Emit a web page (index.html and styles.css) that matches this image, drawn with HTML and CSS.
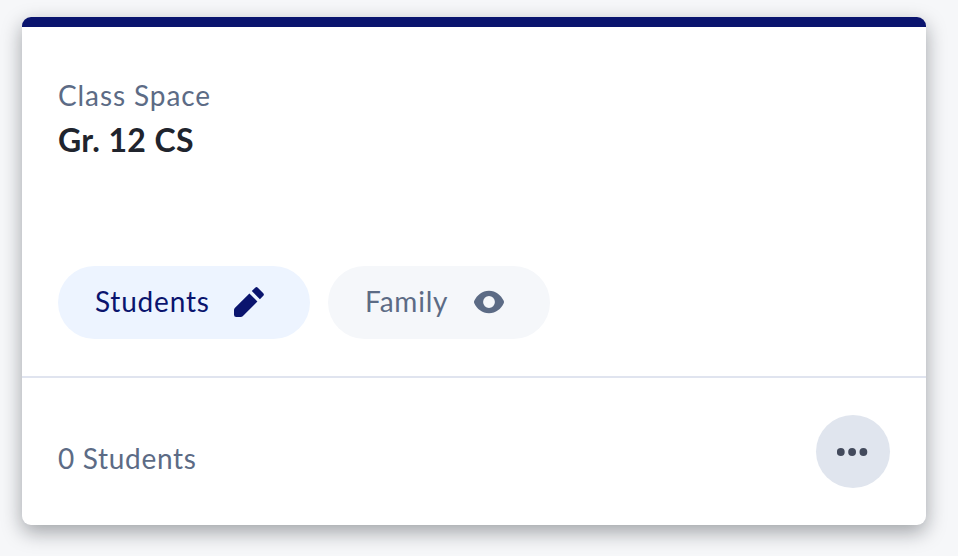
FILE: index.html
```html
<!DOCTYPE html>
<html lang="en">
<head>
<meta charset="utf-8">
<title>Class Space</title>
<link rel="stylesheet" href="styles.css">
</head>
<body>
<article class="card">
  <div class="card-body">
    <div class="eyebrow">Class Space</div>
    <h1 class="title">Gr. 12 CS</h1>
    <div class="pills">
      <div class="pill pill-students">
        <span class="pill-label">Students</span>
        <svg class="icon" viewBox="0 0 30 30" aria-hidden="true"><path d="M0 23Q0 21.9.8 21.1L15.4 6.5 23.4 14.5 8.7 29.2Q7.9 30 6.8 30H2.2Q0 30 0 27.8ZM17.8 4.1 21.2.7Q22.5-.5 23.8.7L29.3 6.2Q30.5 7.5 29.3 8.8L25.9 12.2Z"/></svg>
      </div>
      <div class="pill pill-family">
        <span class="pill-label">Family</span>
        <svg class="icon" viewBox="0 0 30 30" aria-hidden="true"><path fill-rule="evenodd" d="M15 3.7C22 3.7 27 8.3 29.6 13.5Q30.4 15 29.6 16.5C27 21.7 22 26.3 15 26.3S3 21.7.4 16.5Q-.4 15 .4 13.5C3 8.3 8 3.7 15 3.7ZM15 9.1A5.9 5.9 0 1 0 15 20.9 5.9 5.9 0 1 0 15 9.1Z"/></svg>
      </div>
    </div>
  </div>
  <footer class="card-footer">
    <span class="count">0 Students</span>
    <button class="more" type="button" aria-label="More options">
      <svg class="dots" viewBox="0 0 32 8" aria-hidden="true"><circle cx="3.8" cy="4" r="3.9"/><circle cx="15.1" cy="4" r="3.9"/><circle cx="26.4" cy="4" r="3.9"/></svg>
    </button>
  </footer>
</article>
</body>
</html>
```
FILE: styles.css
```css
* { box-sizing: border-box; }

body {
  margin: 0;
  height: 556px;
  overflow: hidden;
  padding: 17px 32px 31px 22px;
  background: #f6f7f9;
  color: #5c6b85;
  font: 400 28px/38px Lato, "Open Sans", sans-serif;
}

.card {
  height: 508px;
  display: flex;
  flex-direction: column;
  border-top: 10px solid #0a146e;
  border-radius: 9px;
  background: #fff;
  box-shadow: 0 7px 20px rgba(10, 15, 25, 0.37);
}

.card-body {
  height: 351px;
  padding: 49px 36px 0;
  border-bottom: 2px solid #e0e4ef;
}

.eyebrow { letter-spacing: 0.9px; }

.title {
  margin: 0;
  color: #20242d;
  font-size: 32px;
  font-weight: 700;
  letter-spacing: 0.35px;
  line-height: 52px;
}

.pills {
  display: flex;
  gap: 18px;
  margin-top: 100px;
}

.pill {
  height: 73px;
  display: flex;
  align-items: center;
  justify-content: space-between;
  padding: 0 46px 1px 37px;
  border-radius: 37px;
}

.pill-students { width: 252px; background: #edf4ff; color: #0a146e; }
.pill-family { width: 222px; background: #f5f7fa; }

.pill-label { padding-bottom: 3px; letter-spacing: 0.8px; }

.icon { width: 30px; height: 30px; fill: currentColor; }

.card-footer {
  flex: 1;
  display: flex;
  justify-content: space-between;
  align-items: flex-start;
  padding: 37px 36px 0;
}

.count { margin-top: 24px; letter-spacing: 0.7px; }

.more {
  width: 74px;
  height: 73px;
  display: flex;
  align-items: center;
  justify-content: center;
  padding: 0;
  border: 0;
  border-radius: 50%;
  background: #e0e5ee;
}

.dots { width: 32px; height: 8px; fill: #434a5c; }
```
